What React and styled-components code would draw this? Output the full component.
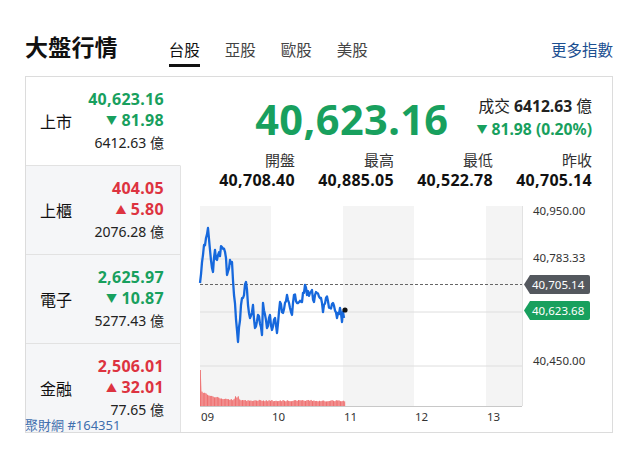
import React from "react";
import styled, { createGlobalStyle } from "styled-components";

const GREEN = "#18a05e";
const RED = "#dd3340";

const GlobalStyle = createGlobalStyle`
  html, body { margin: 0; padding: 0; background: #fff; }
  body {
    font-family: "Noto Sans", "Noto Sans CJK TC", sans-serif;
    color: #222;
  }
`;

const Page = styled.div`
  position: relative;
  width: 588px;
  padding-left: 25px;
`;

const Header = styled.div`
  display: flex;
  align-items: flex-start;
  height: 76px;
`;

const Title = styled.h1`
  margin: 32px 0 0 0;
  font-size: 23px;
  line-height: 30px;
  font-weight: 600;
  color: #111;
  letter-spacing: 0.2px;
`;

const Tabs = styled.nav`
  display: flex;
  gap: 25px;
  margin: 40px 0 0 51px;
`;

const Tab = styled.div`
  font-size: 15.5px;
  line-height: 20px;
  padding-bottom: 4px;
  color: ${(p) => (p.$active ? "#111" : "#444")};
  border-bottom: 3px solid ${(p) => (p.$active ? "#111" : "transparent")};
`;

const MoreLink = styled.a`
  margin: 40px 0 0 auto;
  font-size: 15.5px;
  line-height: 20px;
  color: #1b4f91;
  text-decoration: none;
`;

const Card = styled.div`
  display: flex;
  height: 355px;
  border: 1px solid #dcdcdc;
`;

const LeftCol = styled.div`
  width: 155px;
  display: flex;
  flex-direction: column;
`;

const Row = styled.div`
  flex: 1;
  display: flex;
  align-items: center;
  justify-content: space-between;
  padding: 0 16px 0 14px;
  background: ${(p) => (p.$active ? "#fff" : "#f5f6f8")};
  border-right: 1px solid ${(p) => (p.$active ? "transparent" : "#e2e2e2")};
  border-bottom: ${(p) => (p.$last ? "none" : "1px solid #e2e2e2")};
`;

const RowLabel = styled.div`
  font-size: 16px;
  color: #111;
`;

const RowValues = styled.div`
  display: flex;
  flex-direction: column;
  align-items: flex-end;
`;

const Price = styled.div`
  font-size: 16px;
  line-height: 21px;
  font-weight: 700;
  color: ${(p) => (p.$up ? RED : GREEN)};
  letter-spacing: 0.3px;
`;

const Volume = styled.div`
  font-size: 14px;
  line-height: 21px;
  color: #222;
`;

const Arrow = styled.span`
  font-size: 11px;
  margin-right: 4px;
  position: relative;
  top: -1px;
`;

const Main = styled.div`
  flex: 1;
  padding: 18px 0 0 15px;
  display: flex;
  flex-direction: column;
`;

const TopRow = styled.div`
  display: flex;
  justify-content: flex-end;
  align-items: flex-start;
  gap: 28px;
  padding-right: 20px;
`;

const BigNumber = styled.div`
  font-size: 41.5px;
  line-height: 48px;
  font-weight: 700;
  color: ${GREEN};
  letter-spacing: 0.4px;
`;

const Summary = styled.div`
  display: flex;
  flex-direction: column;
  align-items: flex-end;
`;

const SummaryLine = styled.div`
  font-size: 15.7px;
  line-height: 23px;
  color: ${(p) => p.$color || "#222"};
  font-weight: ${(p) => (p.$bold ? 700 : 400)};
  b { font-weight: 700; }
`;

const Stats = styled.div`
  display: grid;
  grid-template-columns: repeat(4, 1fr);
  padding-right: 20px;
  margin-top: 7px;
`;

const Stat = styled.div`
  display: flex;
  flex-direction: column;
  align-items: flex-end;
`;

const StatLabel = styled.div`
  font-size: 15px;
  line-height: 20px;
  color: #333;
`;

const StatValue = styled.div`
  font-size: 16px;
  line-height: 20px;
  font-weight: 700;
  color: #111;
  letter-spacing: 0.3px;
`;

const ChartBox = styled.div`
  margin-top: 10px;
  width: 416px;
  height: 226px;
  svg { display: block; }
`;

const Watermark = styled.div`
  position: absolute;
  left: 25px;
  top: 418px;
  font-size: 13px;
  line-height: 14px;
  color: #3f6fae;
`;

const rows = [
  { label: "上市", price: "40,623.16", chg: "81.98", vol: "6412.63", up: false, active: true },
  { label: "上櫃", price: "404.05", chg: "5.80", vol: "2076.28", up: true },
  { label: "電子", price: "2,625.97", chg: "10.87", vol: "5277.43", up: false },
  { label: "金融", price: "2,506.01", chg: "32.01", vol: "77.65", up: true },
];

const stats = [
  ["開盤", "40,708.40"],
  ["最高", "40,885.05"],
  ["最低", "40,522.78"],
  ["昨收", "40,705.14"],
];

function rng(seed) {
  let s = seed;
  return () => {
    s = (s * 1103515245 + 12345) % 2147483648;
    return s / 2147483648;
  };
}

const keyPts = [[200,283],[204,245],[206,238],[208,228],[210,250],[213,272],[215,250],[217,260],[222,247],[226,258],[227,275],[230,260],[232,262],[234,295],[238,342],[241,305],[243,298],[246,282],[248,305],[250,318],[253,305],[255,328],[258,315],[262,335],[263,303],[267,328],[270,315],[272,330],[275,318],[277,333],[280,302],[283,313],[287,295],[290,308],[292,315],[294,295],[297,303],[302,302],[305,285],[307,295],[312,290],[314,302],[316,292],[321,298],[323,312],[326,298],[330,308],[333,303],[337,318],[340,308],[342,322],[343,312],[344,318]];

function buildLine() {
  const r = rng(7);
  const pts = [keyPts[0]];
  for (let i = 1; i < keyPts.length; i++) {
    const [x0, y0] = keyPts[i - 1];
    const [x1, y1] = keyPts[i];
    const n = Math.max(1, Math.round((x1 - x0) / 1.1));
    for (let k = 1; k <= n; k++) {
      const t = k / n;
      const j = k === n ? 0 : (r() - 0.5) * 8;
      pts.push([x0 + (x1 - x0) * t, y0 + (y1 - y0) * t + j]);
    }
  }
  return pts.map(([x, y]) => `${x.toFixed(1)},${y.toFixed(1)}`).join(" ");
}

function buildVolume() {
  const r = rng(3);
  const bars = [];
  for (let x = 200.5; x <= 345; x += 1.4) {
    let h;
    if (x < 201.5) h = 36;
    else h = 4.5 + 9 * Math.exp(-(x - 202) / 14) + r() * 1.6;
    if (Math.abs(x - 237) < 1.5) h += 3;
    bars.push([x, h]);
  }
  return bars;
}

const linePts = buildLine();
const volBars = buildVolume();

function Chart() {
  const areaPath =
    `M200,406 ` +
    volBars.map(([x, h]) => `L${x.toFixed(1)},${(406 - h).toFixed(1)}`).join(" ") +
    ` L345,406 Z`;
  return (
    <svg width="416" height="226" viewBox="196 200 416 226">
      <rect x="200" y="206" width="71" height="200" fill="#f4f4f4" />
      <rect x="343" y="206" width="71" height="200" fill="#f4f4f4" />
      <rect x="486" y="206" width="36" height="200" fill="#f4f4f4" />
      {[259, 312, 366].map((y) => (
        <line key={y} x1="200" x2="522" y1={y} y2={y} stroke="#dedede" strokeWidth="1" />
      ))}
      <line x1="522.5" x2="522.5" y1="206" y2="406" stroke="#e2e2e2" />
      <line x1="200" x2="522" y1="406.5" y2="406.5" stroke="#c8c8c8" />
      <path d={areaPath} fill="#f7b3b3" />
      {volBars.map(([x, h], i) => (
        <line key={i} x1={x} x2={x} y1={406} y2={406 - h} stroke="#e95454" strokeWidth="0.7" />
      ))}
      <line x1="200" x2="522" y1="284.5" y2="284.5" stroke="#666" strokeWidth="1" strokeDasharray="3 2" />
      <polyline points={linePts} fill="none" stroke="#1668dc" strokeWidth="2.3" strokeLinejoin="round" />
      <circle cx="345" cy="310" r="2.6" fill="#111" />
      <g fontFamily="'Noto Sans', sans-serif" fontSize="11.5" fill="#333">
        <text x="533" y="215">40,950.00</text>
        <text x="533" y="262">40,783.33</text>
        <text x="533" y="365">40,450.00</text>
        <text x="201" y="420.5">09</text>
        <text x="272" y="420.5">10</text>
        <text x="344" y="420.5">11</text>
        <text x="415" y="420.5">12</text>
        <text x="487" y="420.5">13</text>
      </g>
      <path d="M524,284.5 L530,275 H588 a2,2 0 0 1 2,2 V292 a2,2 0 0 1 -2,2 H530 Z" fill="#54585e" />
      <path d="M524,310.5 L530,301 H588 a2,2 0 0 1 2,2 V318 a2,2 0 0 1 -2,2 H530 Z" fill="#18a05e" />
      <g fontFamily="'Noto Sans', sans-serif" fontSize="11.5" fill="#fff">
        <text x="532" y="288.8">40,705.14</text>
        <text x="532" y="314.8">40,623.68</text>
      </g>
    </svg>
  );
}

export default function App() {
  return (
    <>
      <GlobalStyle />
      <Page>
        <Header>
          <Title>大盤行情</Title>
          <Tabs>
            <Tab $active>台股</Tab>
            <Tab>亞股</Tab>
            <Tab>歐股</Tab>
            <Tab>美股</Tab>
          </Tabs>
          <MoreLink href="#">更多指數</MoreLink>
        </Header>
        <Card>
          <LeftCol>
            {rows.map((r, i) => (
              <Row key={r.label} $active={r.active} $last={i === rows.length - 1}>
                <RowLabel>{r.label}</RowLabel>
                <RowValues>
                  <Price $up={r.up}>{r.price}</Price>
                  <Price $up={r.up}>
                    <Arrow>{r.up ? "▲" : "▼"}</Arrow>
                    {r.chg}
                  </Price>
                  <Volume>{r.vol} 億</Volume>
                </RowValues>
              </Row>
            ))}
          </LeftCol>
          <Main>
            <TopRow>
              <BigNumber>40,623.16</BigNumber>
              <Summary>
                <SummaryLine>
                  成交 <b>6412.63</b> 億
                </SummaryLine>
                <SummaryLine $color={GREEN} $bold>
                  <Arrow>▼</Arrow>81.98 (0.20%)
                </SummaryLine>
              </Summary>
            </TopRow>
            <Stats>
              {stats.map(([l, v]) => (
                <Stat key={l}>
                  <StatLabel>{l}</StatLabel>
                  <StatValue>{v}</StatValue>
                </Stat>
              ))}
            </Stats>
            <ChartBox>
              <Chart />
            </ChartBox>
          </Main>
        </Card>
        <Watermark>聚財網 #164351</Watermark>
      </Page>
    </>
  );
}
